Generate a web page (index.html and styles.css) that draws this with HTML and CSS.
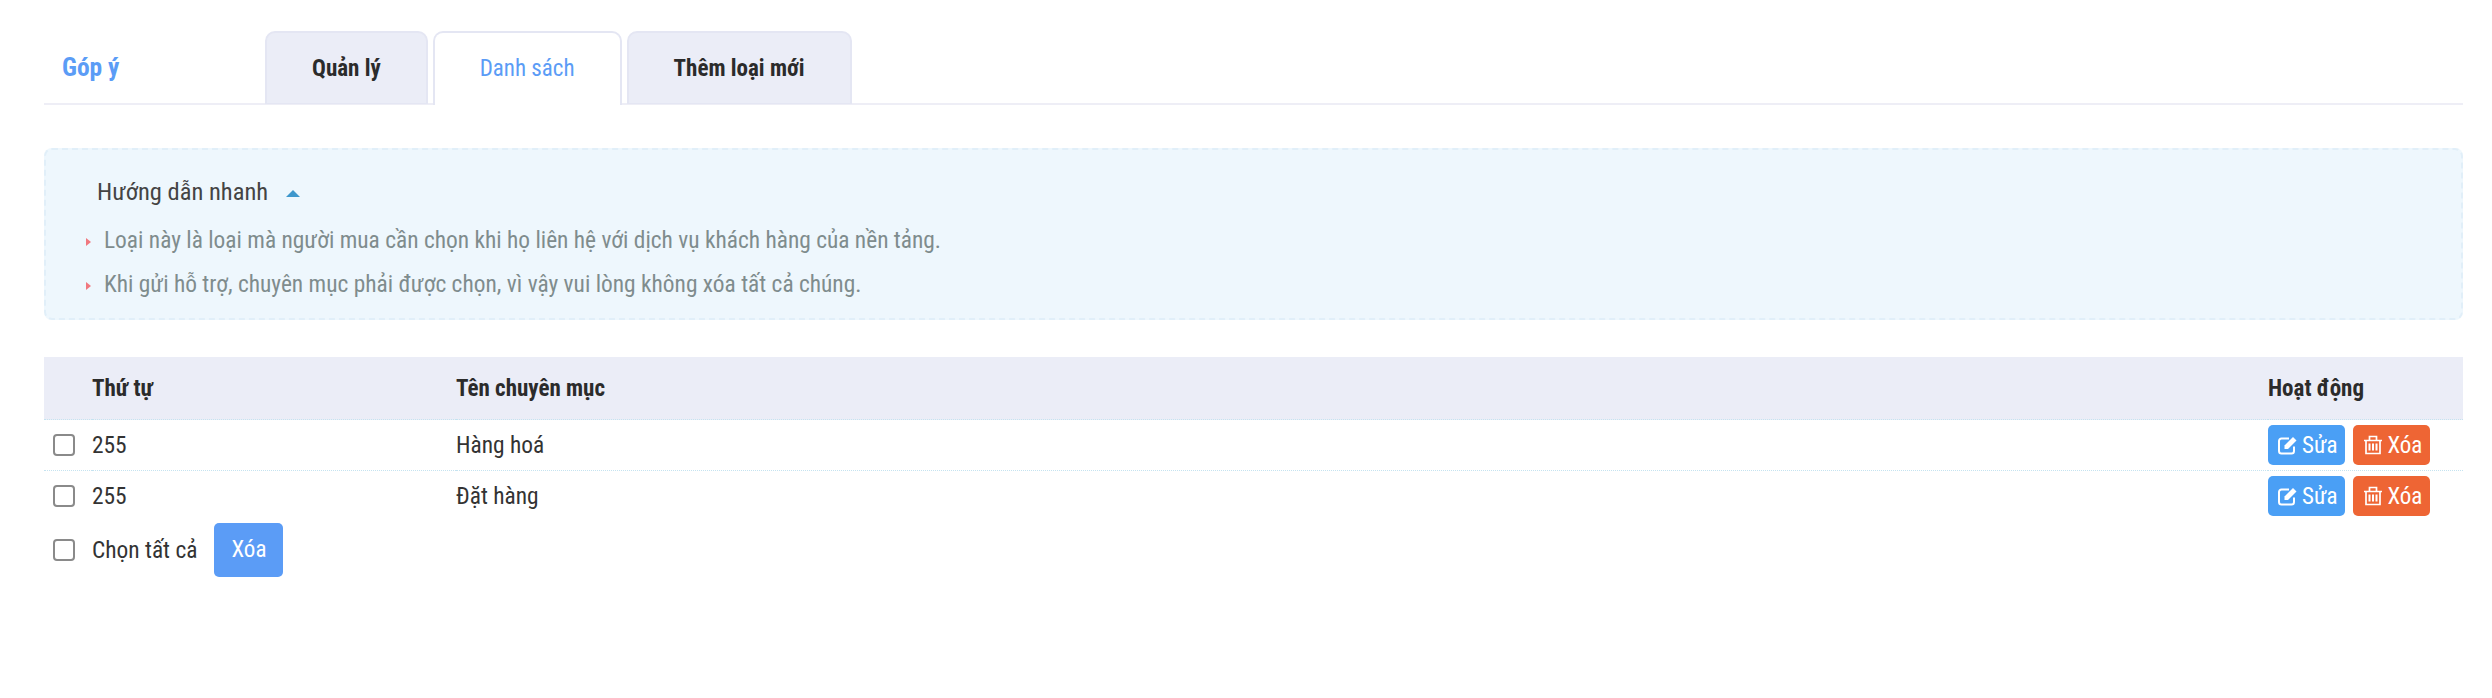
FILE: index.html
```html
<!DOCTYPE html>
<html lang="vi">
<head>
  <meta charset="UTF-8">
  <title>Góp ý</title>
  <link rel="stylesheet" href="styles.css">
</head>
<body>

<div class="page">
  <!-- Tabs -->
  <div class="tabbar">
    <div class="tabbar-title">Góp ý</div>
    <a class="tab">Quản lý</a>
    <a class="tab active">Danh sách</a>
    <a class="tab">Thêm loại mới</a>
  </div>

  <!-- Quick guide -->
  <div class="guide">
    <div class="guide-title">Hướng dẫn nhanh <span class="guide-arrow"></span></div>
    <ul class="guide-list">
      <li>Loại này là loại mà người mua cần chọn khi họ liên hệ với dịch vụ khách hàng của nền tảng.</li>
      <li>Khi gửi hỗ trợ, chuyên mục phải được chọn, vì vậy vui lòng không xóa tất cả chúng.</li>
    </ul>
  </div>

  <table class="list">
    <thead>
      <tr>
        <th class="col-check"></th>
        <th class="col-order">Thứ tự</th>
        <th>Tên chuyên mục</th>
        <th class="col-action">Hoạt động</th>
      </tr>
    </thead>
    <tbody>
      <tr>
        <td><span class="check"></span></td>
        <td>255</td>
        <td>Hàng hoá</td>
        <td class="actions">
          <a class="btn btn-edit">
            <svg class="icon" viewBox="0 0 20 20"><path d="M16 11.500V16a2.500 2.500 0 0 1-2.500 2.500H3.500A2.500 2.500 0 0 1 1 16V6a2.500 2.500 0 0 1 2.500-2.500H11" fill="none" stroke="currentColor" stroke-width="2"/><path d="M6.500 10.500 15 2l3.500 3.500-8.500 8.500H6.500z" fill="currentColor"/></svg>
            Sửa
          </a>
          <a class="btn btn-del">
            <svg class="icon" viewBox="0 0 20 20"><path d="M1 5.500h18M6.500 5V1.500h7V5M3 5.500V18.500h14V5.500" fill="none" stroke="currentColor" stroke-width="1.700"/><path d="M6.500 8.500v7M10 8.500v7M13.500 8.500v7" fill="none" stroke="currentColor" stroke-width="2"/></svg>
            Xóa
          </a>
        </td>
      </tr>
      <tr>
        <td><span class="check"></span></td>
        <td>255</td>
        <td>Đặt hàng</td>
        <td class="actions">
          <a class="btn btn-edit">
            <svg class="icon" viewBox="0 0 20 20"><path d="M16 11.500V16a2.500 2.500 0 0 1-2.500 2.500H3.500A2.500 2.500 0 0 1 1 16V6a2.500 2.500 0 0 1 2.500-2.500H11" fill="none" stroke="currentColor" stroke-width="2"/><path d="M6.500 10.500 15 2l3.500 3.500-8.500 8.500H6.500z" fill="currentColor"/></svg>
            Sửa
          </a>
          <a class="btn btn-del">
            <svg class="icon" viewBox="0 0 20 20"><path d="M1 5.500h18M6.500 5V1.500h7V5M3 5.500V18.500h14V5.500" fill="none" stroke="currentColor" stroke-width="1.700"/><path d="M6.500 8.500v7M10 8.500v7M13.500 8.500v7" fill="none" stroke="currentColor" stroke-width="2"/></svg>
            Xóa
          </a>
        </td>
      </tr>
    </tbody>
  </table>

  <div class="footer-row">
    <span class="check"></span>
    <span class="select-all">Chọn tất cả</span>
    <a class="btn-bulk">Xóa</a>
  </div>
</div>

</body>
</html>
```

FILE: styles.css
```css
body {
  margin: 0;
  font-family: Roboto, "Liberation Sans", sans-serif;
  font-stretch: condensed;
  font-size: 23px;
  color: #333;
  background: #fff;
}
.page {
  padding: 31px 29px 0 44px;
}

.tabbar {
  display: flex;
  align-items: flex-start;
  height: 72px;
  border-bottom: 2px solid #eeeef6;
}
.tabbar-title {
  width: 221px;
  padding-left: 18px;
  box-sizing: border-box;
  line-height: 73px;
  font-size: 25.5px;
  font-weight: bold;
  color: #5b9cf6;
}
.tab {
  display: block;
  height: 70px;
  margin-right: 5px;
  padding: 0 45px;
  border: 2px solid #e4e6f3;
  border-bottom: 1px solid #e4e6f3;
  border-radius: 10px 10px 0 0;
  background: #ebedf7;
  line-height: 71px;
  font-weight: bold;
  color: #2b2b2b;
}
.tab.active {
  background: #fff;
  border-bottom: none;
  color: #5b9cf6;
  font-weight: normal;
  height: 72px;
}

.guide {
  margin-top: 43px;
  height: 172px;
  padding: 22px 51px 0;
  box-sizing: border-box;
  border: 2px dashed #e1eff9;
  border-radius: 8px;
  background: #eef7fd;
}
.guide-title {
  font-size: 24.500px;
  line-height: 40px;
  color: #444;
}
.guide-arrow {
  display: inline-block;
  margin-left: 12px;
  vertical-align: middle;
  border-left: 7px solid transparent;
  border-right: 7px solid transparent;
  border-bottom: 7px solid #3e97cc;
}
.guide-list {
  list-style: none;
  margin: 6px 0 0;
  padding: 0 0 0 7px;
}
.guide-list li {
  position: relative;
  line-height: 44px;
  font-size: 23.400px;
  color: #7f8c8d;
}
.guide-list li::before {
  content: "";
  position: absolute;
  left: -18px;
  top: 20px;
  border-left: 5px solid #f0787f;
  border-top: 4px solid transparent;
  border-bottom: 4px solid transparent;
}

.list {
  margin-top: 37px;
  width: 100%;
  border-collapse: collapse;
  table-layout: fixed;
}
.list th {
  height: 62px;
  padding: 0;
  text-align: left;
  background: #ebedf7;
  color: #2b2b2b;
}
.list td {
  height: 50px;
  padding: 0;
  border-top: 1px dotted #c5e3f0;
  font-size: 23.400px;
}
.col-check { width: 48px; }
.col-order { width: 364px; }
.col-action { width: 195px; }

.check {
  display: block;
  width: 18px;
  height: 18px;
  margin-left: 9px;
  border: 2px solid #8a8a8a;
  border-radius: 4px;
}

.actions {
  white-space: nowrap;
}
.btn {
  display: inline-flex;
  align-items: center;
  gap: 4px;
  box-sizing: border-box;
  width: 77px;
  height: 40px;
  padding-left: 10px;
  border-radius: 5px;
  color: #fff;
  font-size: 23px;
}
.btn-edit {
  background: #4a9ff5;
  margin-right: 3px;
}
.btn-del {
  background: #ee6534;
}
.icon {
  flex: none;
  width: 20px;
  height: 20px;
}

.footer-row {
  display: flex;
  align-items: center;
  height: 54px;
  margin-top: 2px;
}
.select-all {
  margin-left: 17px;
  font-size: 23.400px;
}
.btn-bulk {
  display: block;
  margin-left: 17px;
  width: 69px;
  height: 54px;
  line-height: 54px;
  text-align: center;
  border-radius: 5px;
  background: #5b9cf6;
  color: #fff;
}
```
